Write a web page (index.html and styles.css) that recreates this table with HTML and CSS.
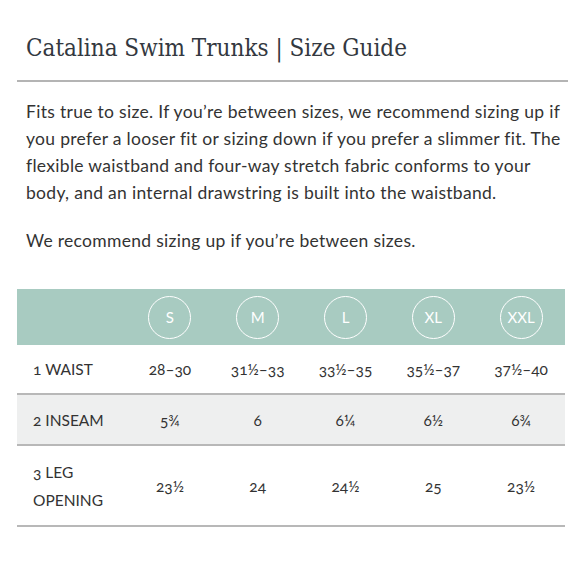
FILE: index.html
```html
<!DOCTYPE html>
<html>
<head>
<meta charset="utf-8">
<link rel="stylesheet" href="styles.css">
</head>
<body>
<div class="page">
  <h1 class="title">Catalina Swim Trunks | Size Guide</h1>
  <div class="intro">
    <p>Fits true to size. If you’re between sizes, we recommend sizing up if you prefer a looser fit or sizing down if you prefer a slimmer fit. The flexible waistband and four-way stretch fabric conforms to your body, and an internal drawstring is built into the waistband.</p>
    <p>We recommend sizing up if you’re between sizes.</p>
  </div>
  <div class="chart">
    <div class="row head">
      <div class="label"></div>
      <div class="cell"><span class="size">S</span></div>
      <div class="cell"><span class="size">M</span></div>
      <div class="cell"><span class="size">L</span></div>
      <div class="cell"><span class="size">XL</span></div>
      <div class="cell"><span class="size">XXL</span></div>
    </div>
    <div class="row r1">
      <div class="label">1 WAIST</div>
      <div class="cell">28–30</div>
      <div class="cell">31½–33</div>
      <div class="cell">33½–35</div>
      <div class="cell">35½–37</div>
      <div class="cell">37½–40</div>
    </div>
    <div class="row r2 shade">
      <div class="label">2 INSEAM</div>
      <div class="cell">5¾</div>
      <div class="cell">6</div>
      <div class="cell">6¼</div>
      <div class="cell">6½</div>
      <div class="cell">6¾</div>
    </div>
    <div class="row r3">
      <div class="label">3 LEG<br>OPENING</div>
      <div class="cell">23½</div>
      <div class="cell">24</div>
      <div class="cell">24½</div>
      <div class="cell">25</div>
      <div class="cell">23½</div>
    </div>
  </div>
</div>
</body>
</html>
```
FILE: styles.css
```css
html, body {
  margin: 0;
  padding: 0;
  background: #ffffff;
}
.page {
  width: 580px;
  height: 580px;
  padding: 0 12px 0 17px;
  box-sizing: border-box;
}
.title {
  margin: 0;
  padding: 34px 0 18px 9px;
  font-family: "DejaVu Serif Condensed", "DejaVu Serif", Georgia, serif;
  font-weight: normal;
  font-size: 24px;
  line-height: 28px;
  color: #333840;
  border-bottom: 2px solid #b4b4b4;
}
.intro {
  padding: 16px 0 0 9px;
  font-family: Lato, "Open Sans", sans-serif;
  font-size: 17.5px;
  letter-spacing: 0.3px;
  line-height: 27px;
  color: #333333;
}
.intro p {
  margin: 0 0 21px 0;
}
.chart {
  margin-top: 35px;
  width: 548px;
  font-family: Lato, "Open Sans", sans-serif;
  font-size: 15.5px;
  color: #333333;
  font-variant-numeric: oldstyle-nums;
}
.row {
  display: grid;
  grid-template-columns: 109px repeat(5, 1fr);
  align-items: center;
  border-bottom: 2px solid #b8b8b8;
}
.row.head {
  height: 56px;
  background: #a8cbc1;
  border-bottom: none;
}
.row.r1 { height: 48px; }
.row.r2 { height: 49px; }
.row.r3 { height: 79px; }
.shade { background: #eeefef; }
.label {
  padding-left: 16px;
  line-height: 28px;
}
.cell {
  display: flex;
  justify-content: center;
}
.size {
  width: 41px;
  height: 41px;
  border: 1.5px solid #ffffff;
  border-radius: 50%;
  color: #ffffff;
  display: flex;
  align-items: center;
  justify-content: center;
  font-size: 15px;
}
```
